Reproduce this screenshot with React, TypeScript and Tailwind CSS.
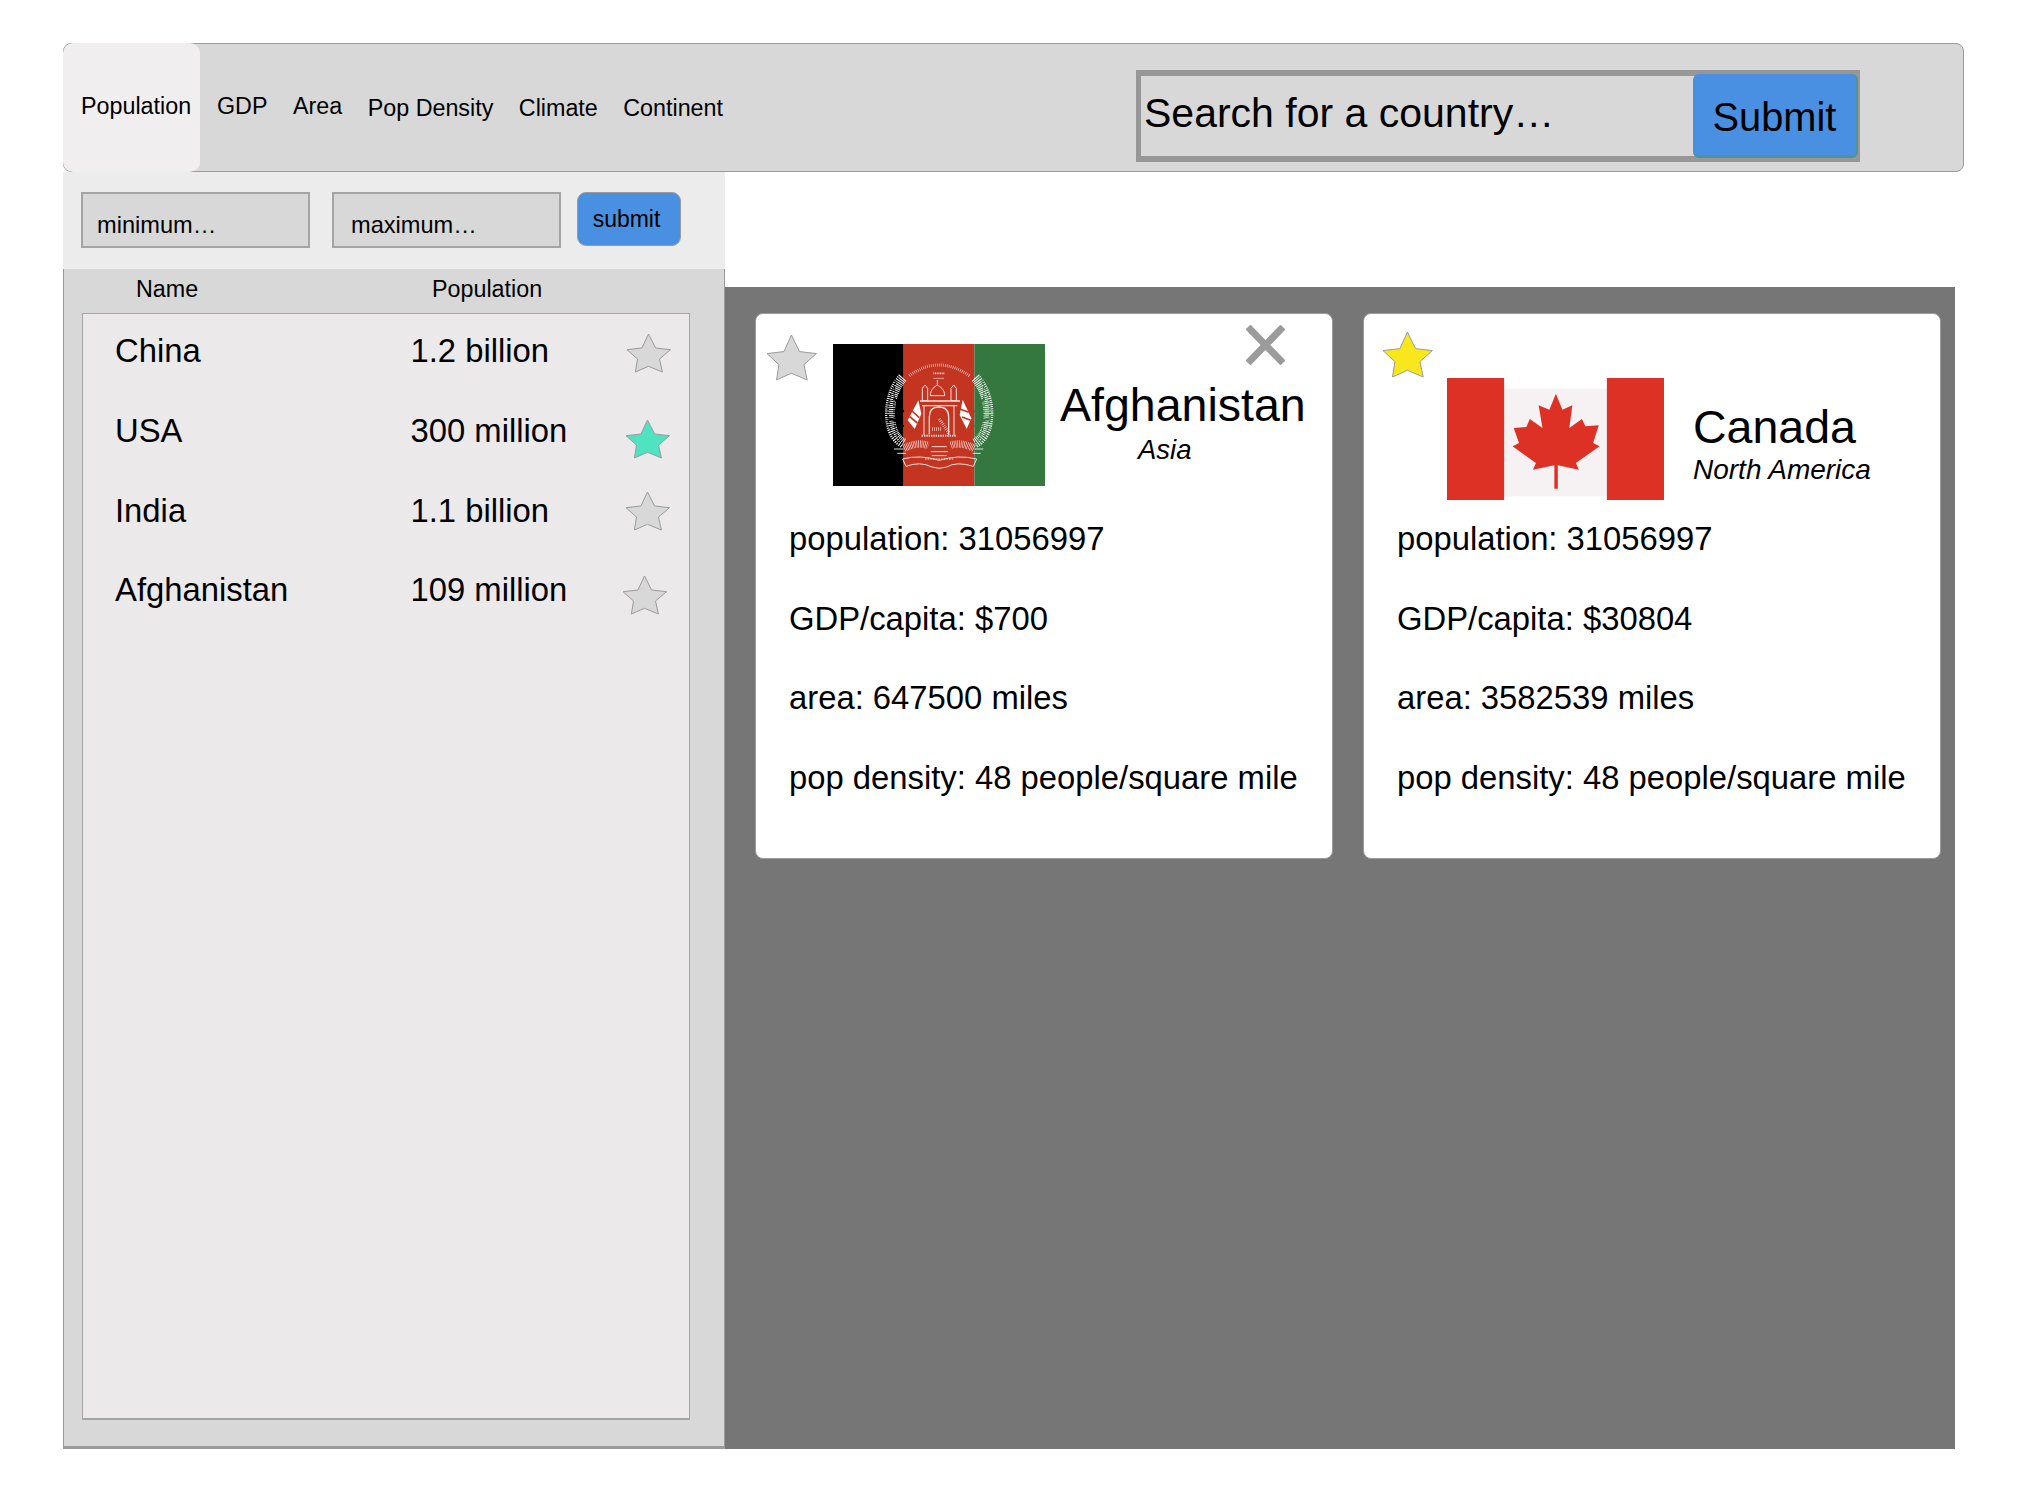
import React from 'react';

const Star: React.FC<{ className: string; fill: string }> = ({ className, fill }) => (
  <svg className={className} viewBox="0 0 44 38" preserveAspectRatio="none" overflow="visible">
    <polygon
      points="21.5,0 28.6,14 43.5,15.7 32.5,25 35.4,38 21.5,32.3 8.4,38 10.5,25 0,15.7 14.9,14"
      fill={fill}
      stroke="#9b9b9b"
      strokeWidth="1"
      vectorEffect="non-scaling-stroke"
    />
  </svg>
);

const AfghanFlag = () => (
  <svg className="w-[212px] h-[142px] shrink-0" viewBox="39 27 636 426" preserveAspectRatio="none">
    <rect x="39" y="27" width="212" height="426" fill="#000000" />
    <rect x="251" y="27" width="212" height="426" fill="#c33421" />
    <rect x="463" y="27" width="212" height="426" fill="#34773f" />
    <g fill="none" stroke="#ffffff">
      {/* inscription */}
      <path d="M268 122 Q355 58 448 122" strokeWidth="9" strokeDasharray="2 4" opacity="0.8" />
      <path d="M340 115 H374" strokeWidth="5" strokeDasharray="3 2" opacity="0.8" />
      <path d="M340 130 H372" strokeWidth="2" opacity="0.8" />
      {/* wreath */}
      <path d="M248 128 C215 165 205 220 212 262 C216 290 228 312 250 325" strokeWidth="30" strokeDasharray="3 3" opacity="0.95" />
      <path d="M466 128 C500 165 510 220 503 262 C499 290 487 312 464 325" strokeWidth="30" strokeDasharray="3 3" opacity="0.95" />
      <path d="M236 128 C208 170 200 220 206 262 C210 290 222 312 244 330" stroke="#000000" strokeWidth="5" strokeDasharray="4 5" />
      <path d="M226 128 C222 170 220 220 224 262 C226 290 232 312 250 325" stroke="#000000" strokeWidth="4" strokeDasharray="5 4" />
      <path d="M478 128 C508 170 514 220 508 262 C504 290 492 312 470 330" stroke="#34773f" strokeWidth="5" strokeDasharray="4 5" />
      <path d="M488 128 C492 170 494 220 490 262 C488 290 482 312 464 325" stroke="#34773f" strokeWidth="4" strokeDasharray="5 4" />
      <path d="M203 250 C225 252 240 262 250 275" stroke="#000000" strokeWidth="7" />
      <path d="M222 190 C235 200 242 215 250 232" stroke="#000000" strokeWidth="7" />
      <path d="M513 250 C490 252 475 262 464 275" stroke="#34773f" strokeWidth="7" />
      <path d="M494 190 C482 200 474 215 464 232" stroke="#34773f" strokeWidth="7" />
      {/* mosque */}
      <g opacity="0.85">
        <path d="M331 182 C331 162 345 155 352 150 C360 155 374 162 374 182 Z" strokeWidth="3" />
        <path d="M352 150 V135" strokeWidth="3" />
        <path d="M307 197 V160 L315 150 L323 160 V197 Z" strokeWidth="3" />
        <path d="M393 197 V160 L401 150 L409 160 V197 Z" strokeWidth="3" />
        <path d="M300 198 H420 M306 212 H412" strokeWidth="4" />
        <path d="M312 212 V300 M402 212 V300" strokeWidth="3" />
        <path d="M328 298 V246 Q328 216 356 216 Q386 216 386 246 V300" strokeWidth="4" />
        <path d="M305 302 H408" strokeWidth="6" strokeDasharray="4 3" />
        <path d="M358 252 L388 296" strokeWidth="10" strokeDasharray="2 4" />
        <path d="M336 282 H366" strokeWidth="10" strokeDasharray="2 4" />
        {/* lower sheaves and ribbon */}
        <path d="M252 340 C275 328 300 322 325 332" strokeWidth="22" strokeDasharray="2 3" />
        <path d="M462 340 C440 328 415 322 390 332" strokeWidth="22" strokeDasharray="2 3" />
        <path d="M335 335 H380 M332 350 H384 M335 362 H380" strokeWidth="3" />
        <path d="M222 342 H250 M232 355 H258 M465 342 H490 M458 355 H482" strokeWidth="3" />
        <path d="M248 372 Q300 358 358 376 Q415 358 470 372 L460 394 Q410 378 380 396 Q358 404 336 396 Q300 378 258 394 Z" strokeWidth="3" />
        <path d="M315 372 H400" strokeWidth="3" strokeDasharray="5 3" />
      </g>
    </g>
    <polygon points="295,196 263,256 284,282 304,236" fill="#ffffff" />
    <path d="M276 228 L298 248 M268 244 L292 264" stroke="#c33421" strokeWidth="5" />
    <polygon points="428,194 419,240 440,282 454,250" fill="#ffffff" />
    <path d="M420 222 L446 232 M426 246 L452 256" stroke="#c33421" strokeWidth="5" />
  </svg>
);

const CanadaFlag = () => (
  <svg className="w-[217px] h-[122px] shrink-0" viewBox="226 235 566 366" preserveAspectRatio="none">
    <rect x="375" y="267" width="268" height="323" fill="#f6f1f3" />
    <rect x="226" y="235" width="149" height="366" fill="#dd3126" />
    <rect x="643" y="235" width="149" height="366" fill="#dd3126" />
    <polygon
      fill="#dd3126"
      points="510,282 527,330 553,317 545,385 578,358 587,380 622,377 607,430 624,440 562,490 570,510 515,497 515,567 506,567 506,497 450,510 458,490 397,440 414,430 400,385 433,382 442,358 475,385 465,317 493,330"
    />
  </svg>
);

const CloseIcon = () => (
  <svg className="w-[39px] h-[40px]" viewBox="0 0 39 40">
    <path d="M2 2 L37 38 M37 2 L2 38" stroke="#9b9b9b" strokeWidth="7" fill="none" />
  </svg>
);

const tabs = [
  { label: 'GDP', className: 'pb-[3px]' },
  { label: 'Area', className: 'pb-[3px]' },
  { label: 'Pop Density', className: 'pt-px' },
  { label: 'Climate', className: 'pt-px' },
  { label: 'Continent', className: 'pt-px' },
];

const countries = [
  { name: 'China', value: '1.2 billion', fill: '#d8d8d8', star: 'mt-[3px] ml-[2px]' },
  { name: 'USA', value: '300 million', fill: '#50e3c2', star: 'mt-[9px] ml-[1px]' },
  { name: 'India', value: '1.1 billion', fill: '#d8d8d8', star: 'mt-[1px] ml-[1px]' },
  { name: 'Afghanistan', value: '109 million', fill: '#d8d8d8', star: 'mt-[6px] -ml-[2px]' },
];

const Stat: React.FC<{ children: React.ReactNode }> = ({ children }) => (
  <p className="text-[32.8px] leading-[40px] whitespace-nowrap">{children}</p>
);

export default function App() {
  return (
    <div className="w-[2026px] h-[1508px] bg-white pt-[43px] pl-[63px] font-['Liberation_Sans',Arial,sans-serif] text-black overflow-hidden">
      {/* top bar */}
      <header className="w-[1901px] h-[129px] flex items-start bg-[#d8d8d8] border border-[#9b9b9b] rounded-[8px] box-border">
        <nav className="h-full flex items-center text-[23.3px] leading-[30px] whitespace-nowrap">
          <a className="h-[129px] -mt-px -ml-px w-[137px] pl-[18px] pb-[3px] flex items-center bg-[#f0eeee] rounded-[10px]">Population</a>
          <div className="flex items-center gap-[25.5px] ml-[17px]">
            {tabs.map((t) => (
              <a key={t.label} className={t.className}>{t.label}</a>
            ))}
          </div>
        </nav>
        <div className="ml-auto mr-[103px] mt-[26px] w-[724px] h-[92px] box-border flex items-center bg-[#d8d8d8] border-[#979797] border-y-[6px] border-x-[5px]">
          <span className="pl-[3px] pb-[6px] text-[41px] leading-[48px] whitespace-nowrap">Search for a country…</span>
          <button className="ml-auto -mr-[3px] w-[165px] h-[84px] shrink-0 pt-[4px] bg-[#4a90e2] rounded-[6px] border-b-[3px] border-r-[2px] border-[#50919b] text-[39.8px] leading-[48px]">Submit</button>
        </div>
      </header>

      <div className="flex">
        {/* left column */}
        <aside className="w-[662px] shrink-0">
          <div className="h-[97px] bg-[#ececec] flex items-start pt-[20px] pl-[18px]">
            <div className="w-[229px] h-[56px] box-border border-2 border-[#a4a4a4] bg-[#d8d8d8] pl-[14px] pt-[16px] text-[23.6px] leading-[30px]">minimum…</div>
            <div className="w-[229px] h-[56px] box-border ml-[22px] border-2 border-[#a4a4a4] bg-[#d8d8d8] pl-[17px] pt-[16px] text-[23.6px] leading-[30px]">maximum…</div>
            <button className="w-[104px] h-[54px] ml-[16px] pr-[5px] bg-[#4a90e2] border border-[#9b9b9b] rounded-[9px] text-[23px] leading-[30px]">submit</button>
          </div>
          <div className="h-[1180px] box-border bg-[#d8d8d8] border-x border-b-[3px] border-[#9b9b9b] flex flex-col">
            <div className="h-[44px] shrink-0 flex items-start pt-[5px] text-[23.3px] leading-[30px]">
              <span className="ml-[72px] w-[296px]">Name</span>
              <span>Population</span>
            </div>
            <div className="ml-[18px] w-[608px] h-[1107px] box-border border border-b-2 border-[#a4a4a4] bg-[#ebe9ea] pt-[17px] pl-[32px]">
              {countries.map((c) => (
                <div key={c.name} className="h-[79.8px] flex items-start text-[32.8px] leading-[40px]">
                  <span className="w-[295.5px] shrink-0">{c.name}</span>
                  <span className="w-[214px] shrink-0 whitespace-nowrap">{c.value}</span>
                  <Star className={`w-[44px] h-[38px] shrink-0 ${c.star}`} fill={c.fill} />
                </div>
              ))}
            </div>
          </div>
        </aside>

        {/* compared countries */}
        <main className="mt-[115px] w-[1230px] h-[1162px] bg-[#767676] flex items-start gap-[30px] pt-[26px] pl-[30px]">
          <section className="relative w-[578px] h-[546px] shrink-0 box-border bg-white border border-[#9b9b9b] rounded-[8px] pl-[33px]">
            <div className="absolute top-[11px] left-[490px]"><CloseIcon /></div>
            <div className="h-[205px] -ml-[33px] flex items-start">
              <Star className="w-[50px] h-[45px] shrink-0 ml-[11px] mt-[21px]" fill="#d8d8d8" />
              <div className="ml-[16px] mt-[30px]"><AfghanFlag /></div>
              <div className="ml-[15px] mt-[65px]">
                <h2 className="text-[46.5px] leading-[52px] whitespace-nowrap">Afghanistan</h2>
                <p className="ml-[78px] mt-[3px] text-[27.5px] leading-[32px] italic">Asia</p>
              </div>
            </div>
            <div className="flex flex-col gap-[39.7px]">
              <Stat>population: 31056997</Stat>
              <Stat>GDP/capita: $700</Stat>
              <Stat>area: 647500 miles</Stat>
              <Stat>pop density: 48 people/square mile</Stat>
            </div>
          </section>

          <section className="w-[578px] h-[546px] shrink-0 box-border bg-white border border-[#9b9b9b] rounded-[8px] pl-[33px]">
            <div className="h-[205px] -ml-[33px] flex items-start">
              <Star className="w-[50px] h-[45px] shrink-0 ml-[19px] mt-[18px]" fill="#f8e71c" />
              <div className="ml-[14px] mt-[64px]"><CanadaFlag /></div>
              <div className="ml-[29px] mt-[87px]">
                <h2 className="text-[46.5px] leading-[52px] whitespace-nowrap">Canada</h2>
                <p className="mt-px text-[28px] leading-[32px] italic whitespace-nowrap">North America</p>
              </div>
            </div>
            <div className="flex flex-col gap-[39.7px]">
              <Stat>population: 31056997</Stat>
              <Stat>GDP/capita: $30804</Stat>
              <Stat>area: 3582539 miles</Stat>
              <Stat>pop density: 48 people/square mile</Stat>
            </div>
          </section>
        </main>
      </div>
    </div>
  );
}
